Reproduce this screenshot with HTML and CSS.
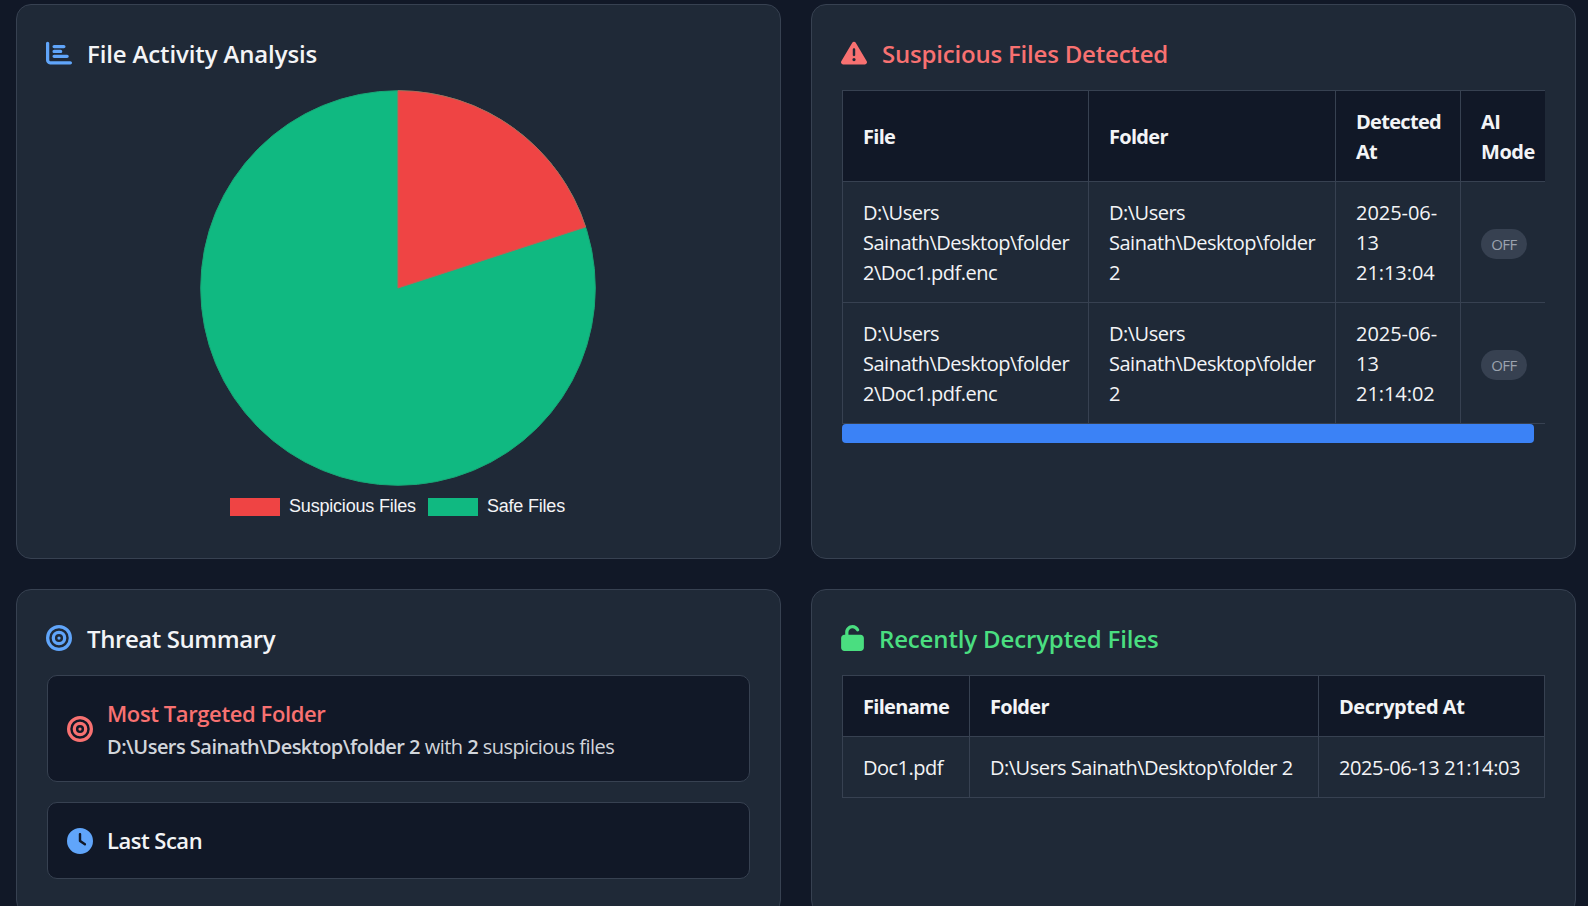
FILE: index.html
```html
<!DOCTYPE html>
<html lang="en">
<head>
<meta charset="utf-8">
<title>File Activity Dashboard</title>
<link rel="stylesheet" href="styles.css">
</head>
<body>
<main class="dashboard">
  <section class="card">
    <h2 class="card-title"><svg class="icon blue" viewBox="0 0 512 512"><path d="M32 32c17.7 0 32 14.3 32 32V400c0 8.8 7.2 16 16 16H480c17.7 0 32 14.3 32 32s-14.3 32-32 32H80c-44.2 0-80-35.800-80-80V64C0 46.300 14.300 32 32 32zm96 96c0-17.700 14.300-32 32-32l192 0c17.700 0 32 14.300 32 32s-14.300 32-32 32l-192 0c-17.700 0-32-14.300-32-32zm32 64H288c17.700 0 32 14.300 32 32s-14.300 32-32 32H160c-17.700 0-32-14.300-32-32s14.300-32 32-32zm0 96H416c17.700 0 32 14.300 32 32s-14.300 32-32 32H160c-17.700 0-32-14.300-32-32s14.300-32 32-32z"/></svg><span class="t-activity">File Activity Analysis</span></h2>
    <div class="chart">
      <svg class="pie" viewBox="0 0 396 396">
        <circle class="slice-safe" cx="198" cy="198" r="197.300"/>
        <path class="slice-suspicious" d="M198 198V.7A197.300 197.300 0 0 1 385.640 137.030Z"/>
      </svg>
      <div class="legend">
        <span class="swatch red-fill"></span><span class="legend-text">Suspicious Files</span>
        <span class="swatch green-fill"></span><span class="legend-text">Safe Files</span>
      </div>
    </div>
  </section>

  <section class="card">
    <h2 class="card-title red"><svg class="icon" viewBox="0 0 512 512"><path d="M256 32c14.200 0 27.300 7.500 34.500 19.800l216 368c7.300 12.400 7.300 27.700 .2 40.100S486.300 480 472 480H40c-14.300 0-27.600-7.700-34.700-20.100s-7-27.800 .2-40.100l216-368C228.700 39.500 241.800 32 256 32zm0 128c-13.300 0-24 10.700-24 24V296c0 13.300 10.700 24 24 24s24-10.700 24-24V184c0-13.300-10.700-24-24-24zm32 224a32 32 0 1 0 -64 0 32 32 0 1 0 64 0z"/></svg><span class="t-suspicious">Suspicious Files Detected</span></h2>
    <div class="table-scroll">
      <table class="detected">
        <colgroup><col class="w-file"><col class="w-folder"><col class="w-time"><col class="w-mode"></colgroup>
        <thead><tr><th>File</th><th>Folder</th><th>Detected<br>At</th><th>AI<br>Mode</th></tr></thead>
        <tbody>
          <tr><td>D:\Users<br>Sainath\Desktop\folder<br>2\Doc1.pdf.enc</td><td>D:\Users<br>Sainath\Desktop\folder<br>2</td><td class="date">2025-06-<br>13<br>21:13:04</td><td><span class="badge">OFF</span></td></tr>
          <tr><td>D:\Users<br>Sainath\Desktop\folder<br>2\Doc1.pdf.enc</td><td>D:\Users<br>Sainath\Desktop\folder<br>2</td><td class="date">2025-06-<br>13<br>21:14:02</td><td><span class="badge">OFF</span></td></tr>
        </tbody>
      </table>
    </div>
    <div class="scroll-thumb"></div>
  </section>

  <section class="card">
    <h2 class="card-title"><svg class="icon blue" viewBox="0 0 512 512"><path d="M448 256A192 192 0 1 0 64 256a192 192 0 1 0 384 0zM0 256a256 256 0 1 1 512 0A256 256 0 1 1 0 256zm256 80a80 80 0 1 0 0-160 80 80 0 1 0 0 160zm0-224a144 144 0 1 1 0 288 144 144 0 1 1 0-288zM224 256a32 32 0 1 1 64 0 32 32 0 1 1 -64 0z"/></svg><span class="t-threat">Threat Summary</span></h2>
    <div class="items">
      <div class="item">
        <svg class="icon red" viewBox="0 0 512 512"><path d="M448 256A192 192 0 1 0 64 256a192 192 0 1 0 384 0zM0 256a256 256 0 1 1 512 0A256 256 0 1 1 0 256zm256 80a80 80 0 1 0 0-160 80 80 0 1 0 0 160zm0-224a144 144 0 1 1 0 288 144 144 0 1 1 0-288zM224 256a32 32 0 1 1 64 0 32 32 0 1 1 -64 0z"/></svg>
        <div class="item-body">
          <h3 class="item-title red">Most Targeted Folder</h3>
          <p class="item-text"><strong>D:\Users Sainath\Desktop\folder 2</strong> with <strong>2</strong> suspicious files</p>
        </div>
      </div>
      <div class="item">
        <svg class="icon blue" viewBox="0 0 512 512"><path d="M256 0a256 256 0 1 1 0 512A256 256 0 1 1 256 0zM232 120V256c0 8 4 15.500 10.700 20l96 64c11 7.400 25.900 4.400 33.300-6.700s4.400-25.900-6.700-33.300L280 243.200V120c0-13.300-10.700-24-24-24s-24 10.700-24 24z"/></svg>
        <h3 class="item-title last">Last Scan</h3>
      </div>
    </div>
  </section>

  <section class="card">
    <h2 class="card-title green"><svg class="icon lock" viewBox="0 0 448 512"><path d="M144 144c0-44.200 35.800-80 80-80c31.900 0 59.400 18.600 72.300 45.700c7.600 16 26.700 22.800 42.600 15.200s22.800-26.700 15.200-42.600C331 33.700 281.500 0 224 0C144.500 0 80 64.500 80 144v48H64c-35.300 0-64 28.700-64 64V448c0 35.300 28.700 64 64 64H384c35.300 0 64-28.700 64-64V256c0-35.300-28.700-64-64-64H144V144z"/></svg><span class="t-decrypted">Recently Decrypted Files</span></h2>
    <table class="decrypted">
      <colgroup><col class="w-name"><col class="w-path"><col class="w-date"></colgroup>
      <thead><tr><th>Filename</th><th>Folder</th><th>Decrypted At</th></tr></thead>
      <tbody><tr><td>Doc1.pdf</td><td>D:\Users Sainath\Desktop\folder 2</td><td class="datetime">2025-06-13 21:14:03</td></tr></tbody>
    </table>
  </section>
</main>
</body>
</html>
```
FILE: styles.css
```css
* { box-sizing: border-box; }
body {
  margin: 0;
  height: 906px;
  overflow: hidden;
  background: #111827;
  color: #f3f4f6;
  font: 20px/30px "Segoe UI", "Open Sans", "Noto Sans", sans-serif;
}
.dashboard {
  display: grid;
  grid-template-columns: 765px 765px;
  grid-template-rows: 555px 326px;
  gap: 30px;
  padding: 4px 0 0 16px;
}
.card {
  padding: 30px;
  background: #1f2937;
  border: 1px solid #374151;
  border-radius: 15px;
}
.card-title {
  display: flex;
  align-items: center;
  gap: 15px;
  height: 37px;
  margin: 0 0 18px;
  font-size: 24px;
  line-height: 37px;
  font-weight: 600;
  white-space: nowrap;
}
.icon { width: 26px; height: 26px; flex: none; fill: currentColor; }
.card-title .icon { margin: -2px 0 0 -1px; }
.icon.lock { width: 23px; }
.blue { color: #60a5fa; }
.red { color: #f87171; }
.green { color: #4ade80; }

.t-activity { letter-spacing: -0.13px; }
.t-suspicious { letter-spacing: -0.2px; }
.t-threat { letter-spacing: -0.42px; }
.t-decrypted { letter-spacing: -0.15px; }

.chart { display: flex; flex-direction: column; align-items: center; padding-right: 2px; }
.pie { width: 396px; height: 396px; }
.slice-safe { fill: #10b981; stroke: #18a777; stroke-width: 1; }
.slice-suspicious { fill: #ef4444; stroke: #bd6155; stroke-width: 1; }
.legend {
  display: flex;
  align-items: center;
  margin-top: 12px;
  height: 18px;
  font: 18px/18px "Liberation Sans", Arial, sans-serif;
  white-space: nowrap;
}
.swatch { width: 50px; height: 18px; margin-right: 9px; }
.legend-text + .swatch { margin-left: 12px; }
.legend-text { margin-top: -3px; letter-spacing: -0.2px; }
.red-fill { background: #ef4444; }
.green-fill { background: #10b981; }

table { border-collapse: collapse; table-layout: fixed; }
th, td {
  padding: 16px 20px 14px;
  border: 1px solid #374151;
  text-align: left;
  vertical-align: middle;
  white-space: nowrap;
  letter-spacing: -0.5px;
}
th { background: #111827; font-weight: 700; letter-spacing: -0.7px; }
th:last-child { letter-spacing: -0.45px; }
.date { letter-spacing: -0.05px; }
.datetime { letter-spacing: -0.4px; }
.table-scroll { overflow: hidden; }
.detected { width: 715px; }
.w-file { width: 246px; }
.w-folder { width: 247px; }
.w-time { width: 125px; }
.w-mode { width: 97px; }
.scroll-thumb {
  width: 692px;
  height: 19px;
  background: #3b82f6;
  border-radius: 4px;
  margin-left: -0.5px;
}
.badge {
  display: block;
  width: 46px;
  height: 30px;
  margin: 1px 0 -1px;
  border-radius: 15px;
  background: #374151;
  color: #9ca3af;
  font-size: 15px;
  font-weight: 400;
  text-align: center;
}
.decrypted { width: 702px; }
.w-name { width: 127px; }
.w-path { width: 349px; }
.w-date { width: 226px; }

.items { display: grid; gap: 20px; }
.item {
  display: flex;
  align-items: center;
  gap: 14px;
  min-height: 77px;
  padding: 20px 20px 20px 19px;
  background: #111827;
  border: 1px solid #374151;
  border-radius: 10px;
}
.item:first-child { min-height: 107px; }
.item-title {
  margin: 0;
  font-size: 22px;
  line-height: 34px;
  font-weight: 600;
  letter-spacing: -0.4px;
}
.item-title.last { padding-bottom: 2px; line-height: 32px; letter-spacing: -0.5px; }
.item-body .item-title { line-height: 32px; padding-bottom: 2px; }
.item-text { margin: 0; padding-top: 1px; line-height: 29px; color: #d1d5db; letter-spacing: -0.53px; white-space: nowrap; }
.item-text strong { font-weight: 600; }
```
